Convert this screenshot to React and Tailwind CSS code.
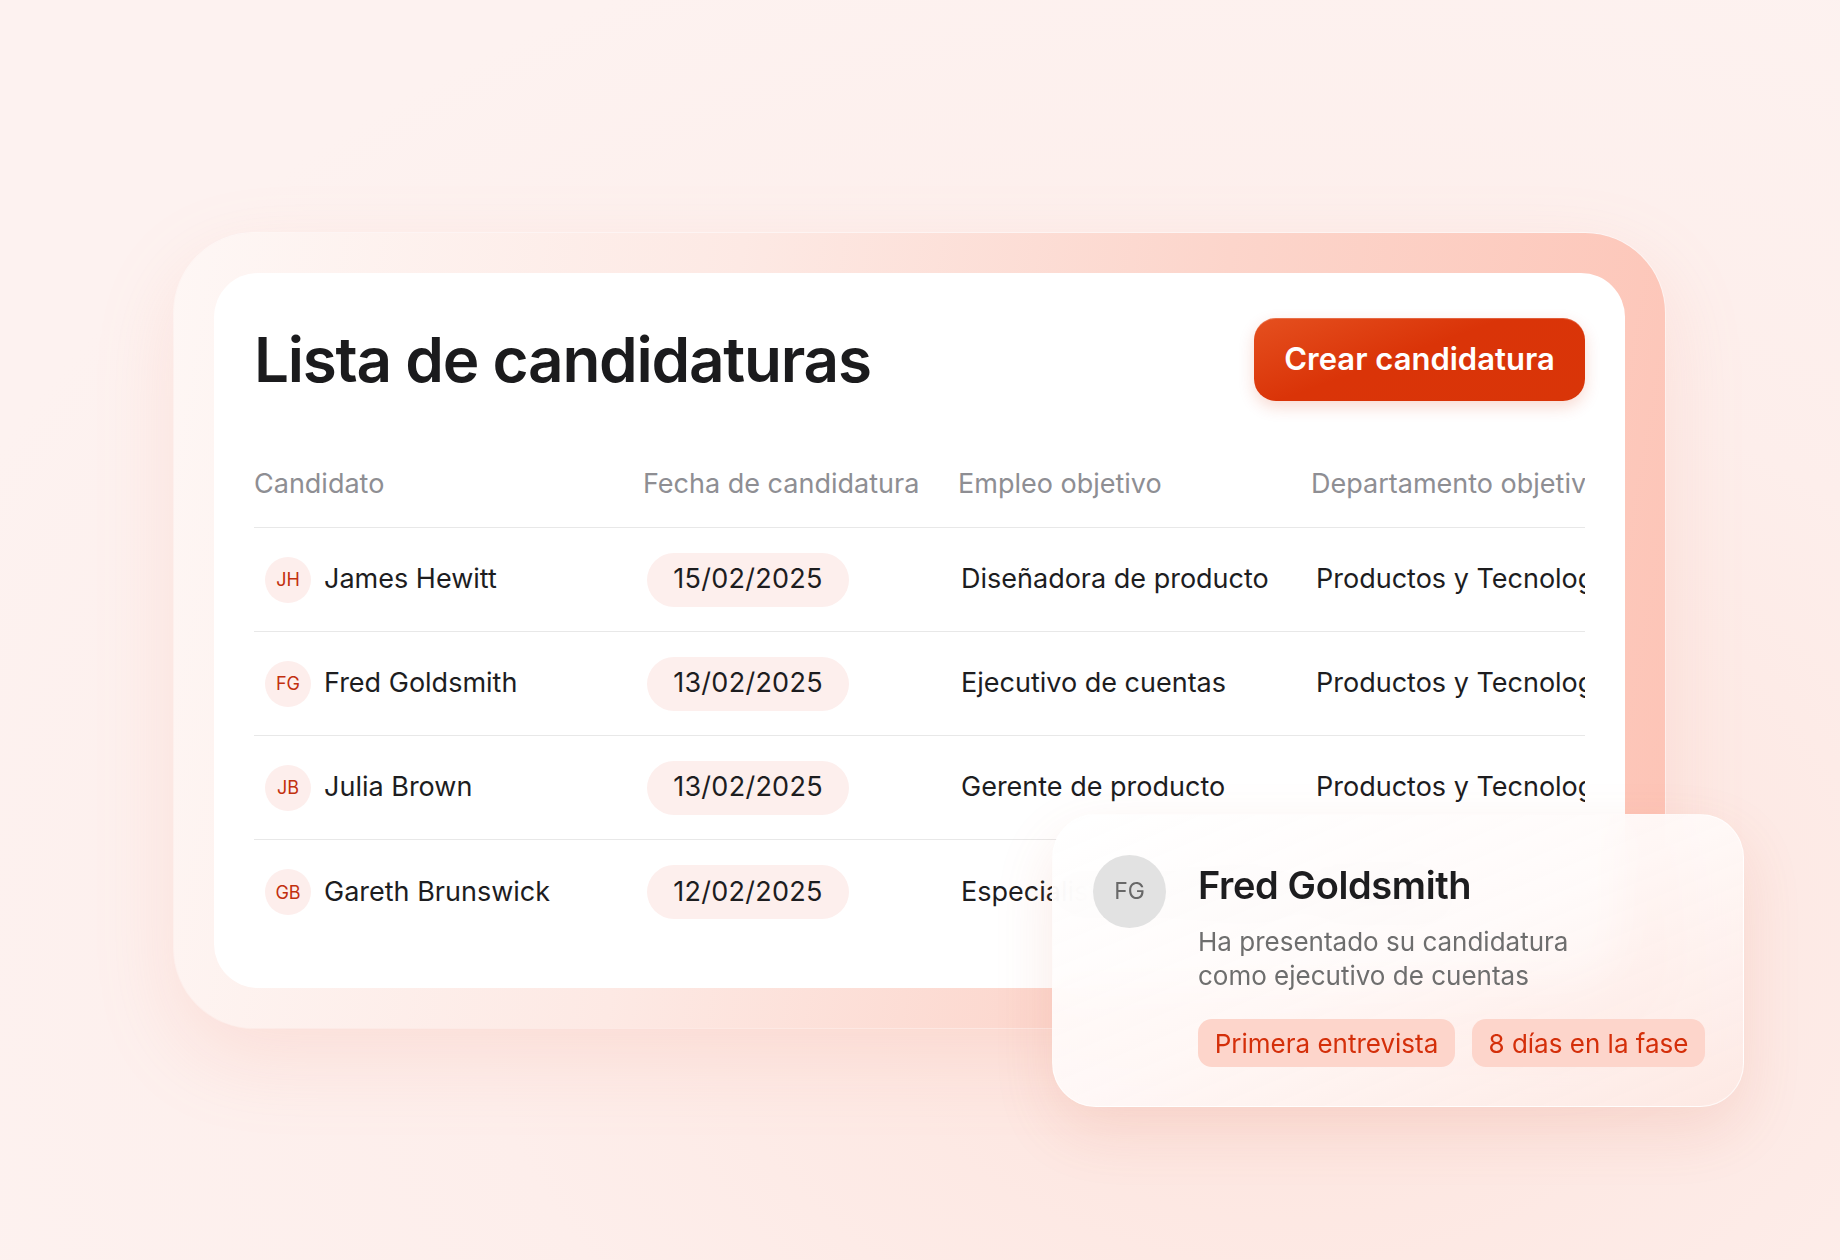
import React from "react";

const rows = [
  {
    initials: "JH",
    name: "James Hewitt",
    date: "15/02/2025",
    job: "Diseñadora de producto",
    dept: "Productos y Tecnología",
  },
  {
    initials: "FG",
    name: "Fred Goldsmith",
    date: "13/02/2025",
    job: "Ejecutivo de cuentas",
    dept: "Productos y Tecnología",
  },
  {
    initials: "JB",
    name: "Julia Brown",
    date: "13/02/2025",
    job: "Gerente de producto",
    dept: "Productos y Tecnología",
  },
  {
    initials: "GB",
    name: "Gareth Brunswick",
    date: "12/02/2025",
    job: "Especialista de marketing",
    dept: "Marketing",
  },
];

const headers = [
  "Candidato",
  "Fecha de candidatura",
  "Empleo objetivo",
  "Departamento objetivo",
];

const ApplicantRow = ({ row, last }) => (
  <div
    className={`grid grid-cols-[389px_315px_353px_1fr] h-[104px] items-center ${
      last ? "" : "border-b border-[#e8e8e8]"
    }`}
  >
    <div className="flex items-center pl-[11px] gap-[13px]">
      <div className="w-[46px] h-[46px] rounded-full bg-[#fdeeec] flex items-center justify-center text-[18px] text-[#c2300e]">
        {row.initials}
      </div>
      <span className="whitespace-nowrap">{row.name}</span>
    </div>
    <div className="pl-[4px]">
      <span className="inline-flex items-center justify-center w-[202px] h-[54px] rounded-full bg-[#fdefed] tracking-[0.01em]">
        {row.date}
      </span>
    </div>
    <div className="pl-[3px] whitespace-nowrap">{row.job}</div>
    <div className="pl-[5px] whitespace-nowrap">{row.dept}</div>
  </div>
);

const ApplicantCard = () => (
  <div className="absolute left-[878px] top-[581px] w-[692px] flex gap-[32px] p-[40px] pb-[39px] rounded-[44px] border border-white/70 bg-gradient-to-br from-white/95 via-[#fffaf9]/90 to-[#fde9e4]/85 backdrop-blur-xl shadow-[0_24px_60px_rgba(214,96,70,0.14)]">
    <div className="w-[73px] h-[73px] shrink-0 rounded-full bg-[#e2e2e2] flex items-center justify-center text-[23px] text-[#686868]">
      FG
    </div>
    <div className="flex flex-col pt-[8px]">
      <div className="text-[38px] leading-[44px] font-semibold text-[#1d1d1f] tracking-[-0.01em]">
        Fred Goldsmith
      </div>
      <p className="mt-[18px] text-[26px] leading-[34px] text-[#6e6e6e]">
        Ha presentado su candidatura
        <br />
        como ejecutivo de cuentas
      </p>
      <div className="mt-[26px] flex gap-[17px]">
        <span className="h-[48px] w-[257px] flex items-center justify-center rounded-[14px] bg-[#fdd5cb] text-[26px] text-[#d42f0a] whitespace-nowrap">
          Primera entrevista
        </span>
        <span className="h-[48px] w-[233px] flex items-center justify-center rounded-[14px] bg-[#fdd5cb] text-[26px] text-[#d42f0a] whitespace-nowrap">
          8 días en la fase
        </span>
      </div>
    </div>
  </div>
);

export default function App() {
  return (
    <div
      className="w-full h-[1260px] overflow-hidden bg-[#fdf0ee] bg-[radial-gradient(ellipse_at_70%_75%,#fde3dc_0%,#fdeeeb_45%,#fdf2f0_80%)] pt-[233px] pl-[174px]"
      style={{ fontFamily: "Inter, 'Noto Sans', sans-serif" }}
    >
      <div className="relative w-[1491px]">
        <div className="p-[40px] rounded-[80px] bg-[linear-gradient(100deg,#fef7f5_0%,#fde9e4_35%,#fcd5cb_65%,#fdc3b5_100%)] shadow-[0_30px_80px_rgba(245,150,125,0.18),0_0_0_1px_rgba(255,255,255,0.6)]">
          <div className="bg-white rounded-[44px] px-[40px] pt-[45px] pb-[44px] text-[27px] text-[#1d1d1f]">
            <div className="flex items-center justify-between h-[83px]">
              <h1 className="text-[62px] font-semibold tracking-[-0.02em] text-[#1b1b1d] leading-none">
                Lista de candidaturas
              </h1>
              <button className="h-[83px] w-[331px] rounded-[22px] bg-[linear-gradient(160deg,#e5501f_0%,#da3408_45%,#d93508_100%)] text-white text-[31px] font-semibold shadow-[0_6px_16px_rgba(217,52,8,0.18),inset_0_1px_0_rgba(255,255,255,0.2)]">
                Crear candidatura
              </button>
            </div>
            <div className="mt-[40px] overflow-hidden">
              <div className="grid grid-cols-[389px_315px_353px_1fr] h-[87px] items-center border-b border-[#e8e8e8] text-[#8e8e93] whitespace-nowrap">
                {headers.map((h) => (
                  <div key={h}>{h}</div>
                ))}
              </div>
              {rows.map((row, i) => (
                <ApplicantRow
                  key={row.name}
                  row={row}
                  last={i === rows.length - 1}
                />
              ))}
            </div>
          </div>
        </div>
        <ApplicantCard />
      </div>
    </div>
  );
}
